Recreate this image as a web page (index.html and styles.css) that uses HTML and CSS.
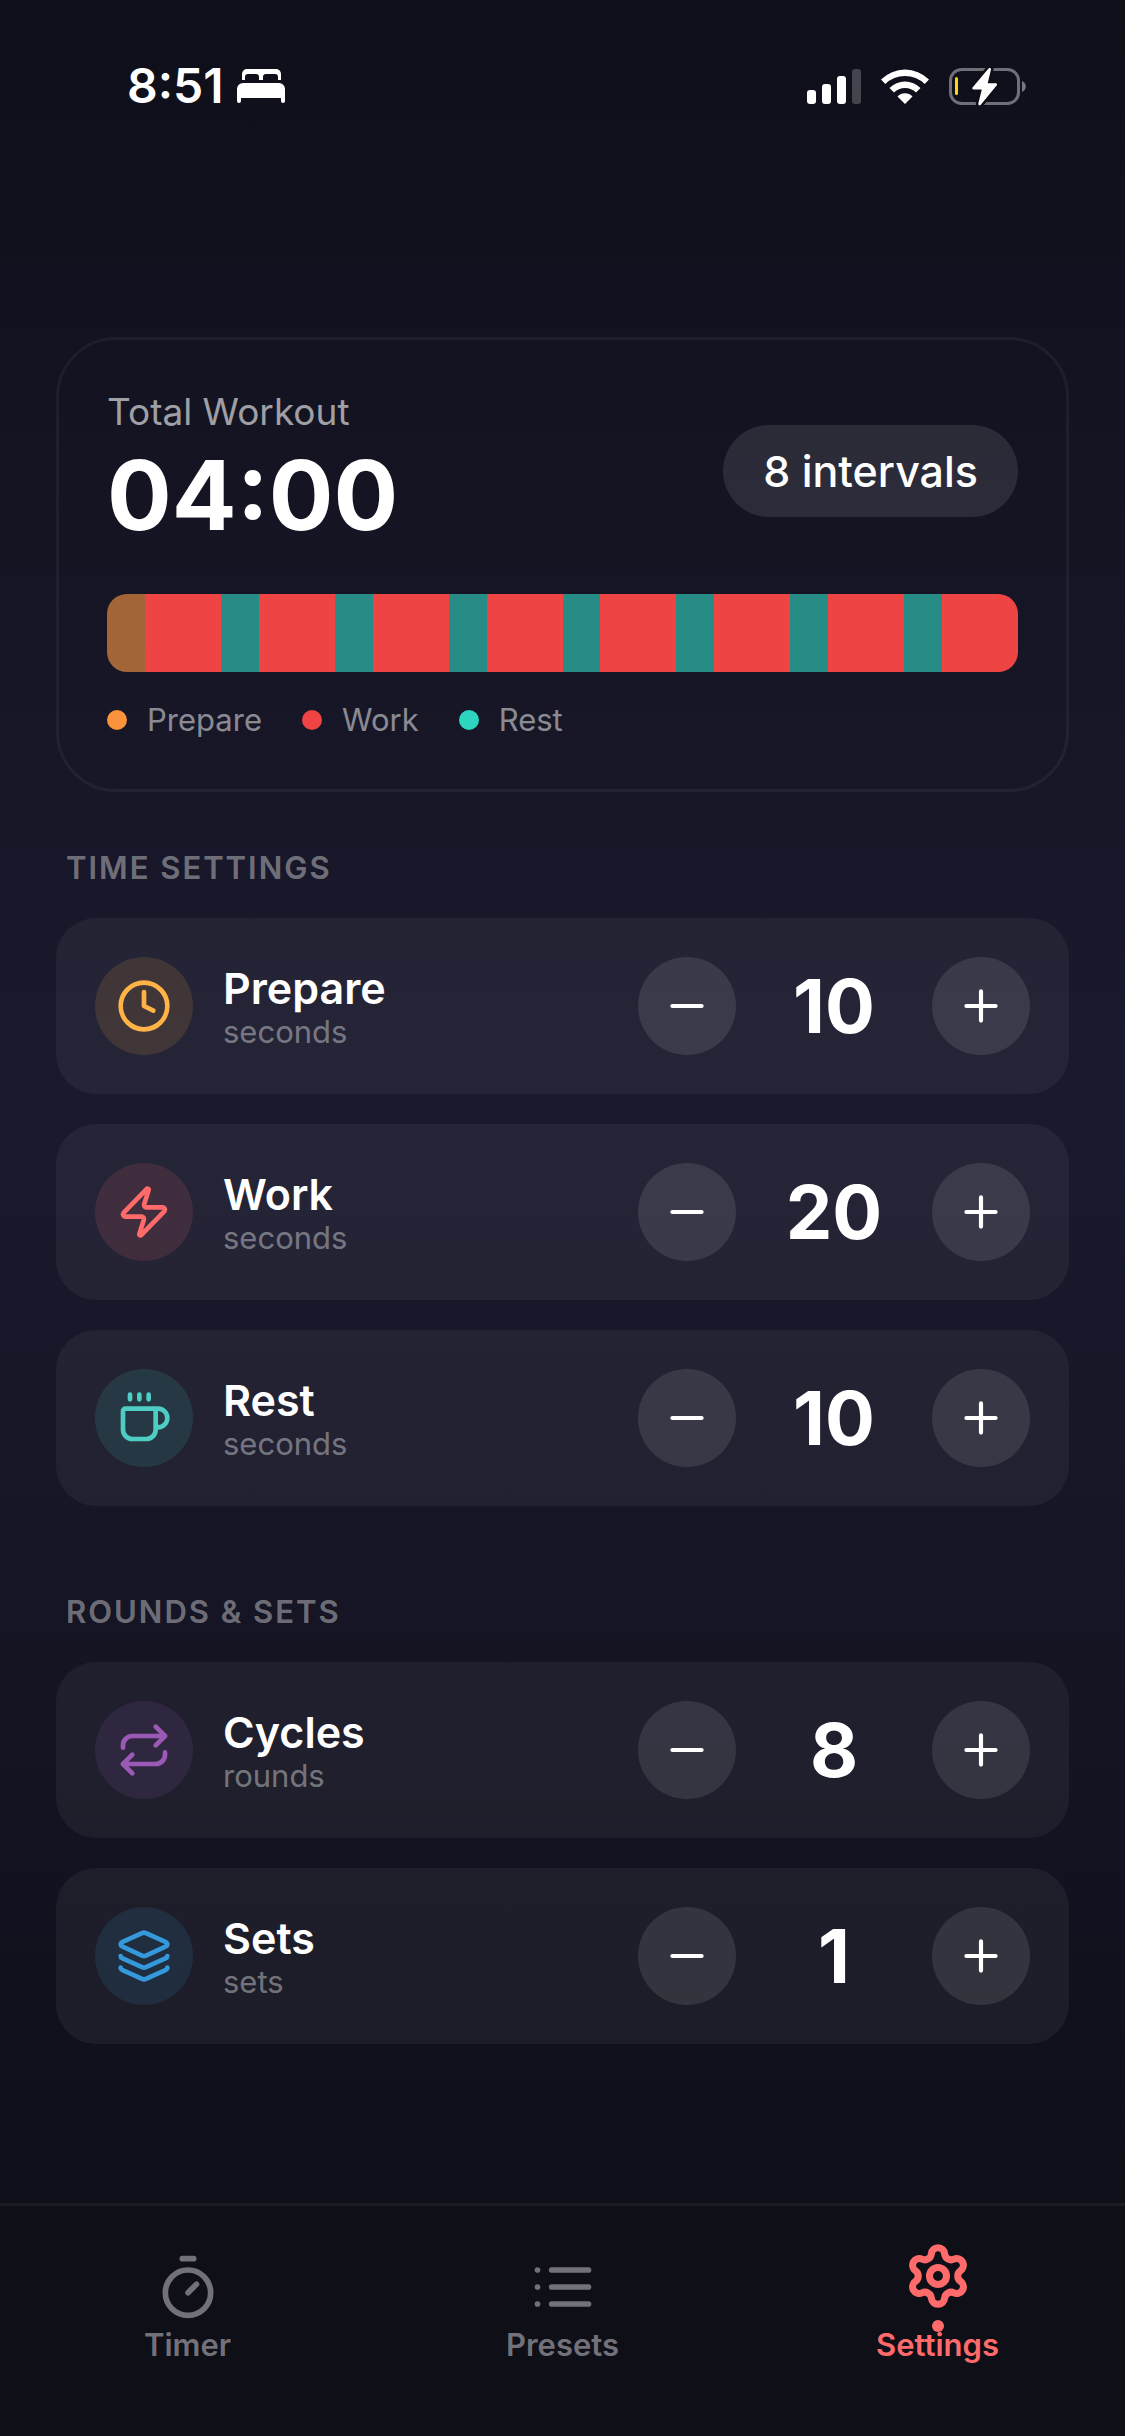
FILE: index.html
```html
<!DOCTYPE html>
<html lang="en">
<head>
  <meta charset="UTF-8">
  <meta name="viewport" content="width=device-width, initial-scale=1.0">
  <title>Settings</title>
  <link rel="stylesheet" href="styles.css">
</head>
<body>
  <div class="screen">
    <header class="status-bar">
      <div class="status-left">
        <span class="status-time">8:51</span>
        <svg class="bed-icon" viewBox="0 0 48 34" fill="currentColor">
          <path d="M5 11V5a5 5 0 0 1 5-5h29a5 5 0 0 1 5 5v6h-3V8a3 3 0 0 0-3-3H29a3 3 0 0 0-3 3v3h-4V8a3 3 0 0 0-3-3H11a3 3 0 0 0-3 3v3z"/>
          <path d="M0 20a6 6 0 0 1 6-6h36a6 6 0 0 1 6 6v12a2 2 0 0 1-4 0v-3H4v3a2 2 0 0 1-4 0z"/>
        </svg>
      </div>
      <div class="status-right">
        <svg class="signal-icon" viewBox="0 0 54 35" fill="currentColor">
          <rect x="0" y="21" width="9" height="14" rx="3"/>
          <rect x="15" y="15" width="9" height="20" rx="3"/>
          <rect x="30" y="7" width="9" height="28" rx="3"/>
          <rect x="45" y="0" width="9" height="35" rx="3" opacity="0.22"/>
        </svg>
        <svg class="wifi-icon" viewBox="0 0 48 35" fill="currentColor">
          <path d="M0 10.500a34 34 0 0 1 48 0l-4.300 4.500a28 28 0 0 0-39.400 0z"/>
          <path d="M8.500 19a22 22 0 0 1 31 0l-4.500 4.500a15.500 15.500 0 0 0-22 0z"/>
          <path d="M16.500 27.500a10.500 10.500 0 0 1 15 0L24 35z"/>
        </svg>
        <svg class="battery-icon" viewBox="0 0 77 39">
          <rect x="1.500" y="2.500" width="68" height="34" rx="11" fill="none" stroke="#6f6f78" stroke-width="3"/>
          <path d="M73 14c5 2 5 9 0 11z" fill="#77777f"/>
          <rect x="6" y="10" width="3" height="18" rx="1.500" fill="#ffd60a"/>
          <path d="M39.500 1.500 23.500 20.500c-.6 1 0 1.900 1 1.900h8.300L29.300 36.500c0 2 1.500 2.500 2.700 1L47.800 18.200c.6-1 0-1.900-1-1.900H38.700L42 2.500c.3-1.500-1.300-2.200-2.500-1z" fill="#fff" stroke="#0f0f1a" stroke-width="5" paint-order="stroke"/>
        </svg>
      </div>
    </header>

    <main class="content">
      <section class="summary-card">
        <div class="summary-header">
          <div>
            <div class="summary-label">Total Workout</div>
            <div class="summary-time">04:00</div>
          </div>
          <div class="interval-badge">8 intervals</div>
        </div>

        <div class="timeline">
          <span class="segment prepare"></span>
          <span class="segment work"></span>
          <span class="segment rest"></span>
          <span class="segment work"></span>
          <span class="segment rest"></span>
          <span class="segment work"></span>
          <span class="segment rest"></span>
          <span class="segment work"></span>
          <span class="segment rest"></span>
          <span class="segment work"></span>
          <span class="segment rest"></span>
          <span class="segment work"></span>
          <span class="segment rest"></span>
          <span class="segment work"></span>
          <span class="segment rest"></span>
          <span class="segment work"></span>
        </div>

        <ul class="legend">
          <li><span class="legend-dot dot-prepare"></span>Prepare</li>
          <li><span class="legend-dot dot-work"></span>Work</li>
          <li><span class="legend-dot dot-rest"></span>Rest</li>
        </ul>
      </section>

      <section class="settings-section">
        <h2 class="section-title">TIME SETTINGS</h2>

        <div class="setting-row">
          <span class="setting-icon icon-prepare">
            <svg class="icon" viewBox="0 0 24 24"><circle cx="12" cy="12" r="10"/><path d="M12 6v6l4 2"/></svg>
          </span>
          <div class="setting-info">
            <div class="setting-name">Prepare</div>
            <div class="setting-unit">seconds</div>
          </div>
          <div class="stepper">
            <button class="step-btn" type="button" aria-label="Decrease prepare"><svg class="icon" viewBox="0 0 24 24"><path d="M5 12h14"/></svg></button>
            <output class="step-value">10</output>
            <button class="step-btn" type="button" aria-label="Increase prepare"><svg class="icon" viewBox="0 0 24 24"><path d="M5 12h14M12 5v14"/></svg></button>
          </div>
        </div>

        <div class="setting-row">
          <span class="setting-icon icon-work">
            <svg class="icon" viewBox="0 0 24 24"><path d="M4 14a1 1 0 0 1-.78-1.63l9.900-10.200a.5.5 0 0 1 .86.46l-1.920 6.020A1 1 0 0 0 13 10h7a1 1 0 0 1 .78 1.630l-9.900 10.200a.5.5 0 0 1-.86-.46l1.920-6.020A1 1 0 0 0 11 14z"/></svg>
          </span>
          <div class="setting-info">
            <div class="setting-name">Work</div>
            <div class="setting-unit">seconds</div>
          </div>
          <div class="stepper">
            <button class="step-btn" type="button" aria-label="Decrease work"><svg class="icon" viewBox="0 0 24 24"><path d="M5 12h14"/></svg></button>
            <output class="step-value">20</output>
            <button class="step-btn" type="button" aria-label="Increase work"><svg class="icon" viewBox="0 0 24 24"><path d="M5 12h14M12 5v14"/></svg></button>
          </div>
        </div>

        <div class="setting-row">
          <span class="setting-icon icon-rest">
            <svg class="icon" viewBox="0 0 24 24"><path d="M6 2v2M10 2v2M14 2v2"/><path d="M16 8a1 1 0 0 1 1 1v8a4 4 0 0 1-4 4H7a4 4 0 0 1-4-4V9a1 1 0 0 1 1-1h14a4 4 0 1 1 0 8h-1"/></svg>
          </span>
          <div class="setting-info">
            <div class="setting-name">Rest</div>
            <div class="setting-unit">seconds</div>
          </div>
          <div class="stepper">
            <button class="step-btn" type="button" aria-label="Decrease rest"><svg class="icon" viewBox="0 0 24 24"><path d="M5 12h14"/></svg></button>
            <output class="step-value">10</output>
            <button class="step-btn" type="button" aria-label="Increase rest"><svg class="icon" viewBox="0 0 24 24"><path d="M5 12h14M12 5v14"/></svg></button>
          </div>
        </div>
      </section>

      <section class="settings-section">
        <h2 class="section-title">ROUNDS &amp; SETS</h2>

        <div class="setting-row">
          <span class="setting-icon icon-cycles">
            <svg class="icon" viewBox="0 0 24 24"><path d="m17 2 4 4-4 4"/><path d="M3 11v-1a4 4 0 0 1 4-4h14"/><path d="m7 22-4-4 4-4"/><path d="M21 13v1a4 4 0 0 1-4 4H3"/></svg>
          </span>
          <div class="setting-info">
            <div class="setting-name">Cycles</div>
            <div class="setting-unit">rounds</div>
          </div>
          <div class="stepper">
            <button class="step-btn" type="button" aria-label="Decrease cycles"><svg class="icon" viewBox="0 0 24 24"><path d="M5 12h14"/></svg></button>
            <output class="step-value">8</output>
            <button class="step-btn" type="button" aria-label="Increase cycles"><svg class="icon" viewBox="0 0 24 24"><path d="M5 12h14M12 5v14"/></svg></button>
          </div>
        </div>

        <div class="setting-row">
          <span class="setting-icon icon-sets">
            <svg class="icon" viewBox="0 0 24 24"><path d="M12.830 2.180a2 2 0 0 0-1.660 0L2.600 6.080a1 1 0 0 0 0 1.830l8.580 3.910a2 2 0 0 0 1.660 0l8.580-3.900a1 1 0 0 0 0-1.830z"/><path d="M2 12a1 1 0 0 0 .58.91l8.600 3.910a2 2 0 0 0 1.650 0l8.580-3.900A1 1 0 0 0 22 12"/><path d="M2 17a1 1 0 0 0 .58.91l8.600 3.910a2 2 0 0 0 1.650 0l8.580-3.900A1 1 0 0 0 22 17"/></svg>
          </span>
          <div class="setting-info">
            <div class="setting-name">Sets</div>
            <div class="setting-unit">sets</div>
          </div>
          <div class="stepper">
            <button class="step-btn" type="button" aria-label="Decrease sets"><svg class="icon" viewBox="0 0 24 24"><path d="M5 12h14"/></svg></button>
            <output class="step-value">1</output>
            <button class="step-btn" type="button" aria-label="Increase sets"><svg class="icon" viewBox="0 0 24 24"><path d="M5 12h14M12 5v14"/></svg></button>
          </div>
        </div>
      </section>
    </main>
  </div>

  <nav class="tab-bar">
    <a class="tab" href="#timer">
      <svg class="icon" viewBox="0 0 24 24"><path d="M10 2h4M12 14l3-3"/><circle cx="12" cy="14" r="8"/></svg>
      <span>Timer</span>
    </a>
    <a class="tab" href="#presets">
      <svg class="icon" viewBox="0 0 24 24"><path d="M3 6h.01M3 12h.01M3 18h.01M8 6h13M8 12h13M8 18h13"/></svg>
      <span>Presets</span>
    </a>
    <a class="tab active" href="#settings" aria-current="page">
      <svg class="icon" viewBox="0 0 24 24"><path d="M9.671 4.136a2.340 2.340 0 0 1 4.659 0 2.340 2.340 0 0 0 3.319 1.915 2.340 2.340 0 0 1 2.330 4.033 2.340 2.340 0 0 0 0 3.831 2.340 2.340 0 0 1-2.330 4.033 2.340 2.340 0 0 0-3.319 1.915 2.340 2.340 0 0 1-4.659 0 2.340 2.340 0 0 0-3.320-1.915 2.340 2.340 0 0 1-2.330-4.033 2.340 2.340 0 0 0 0-3.831A2.340 2.340 0 0 1 6.350 6.051a2.340 2.340 0 0 0 3.319-1.915"/><circle cx="12" cy="12" r="3"/></svg>
      <span>Settings</span>
    </a>
  </nav>
</body>
</html>
```
FILE: styles.css
```css
* {
  box-sizing: border-box;
}

body {
  margin: 0;
  min-height: 100vh;
  display: flex;
  flex-direction: column;
  background-color: #0f0f1a;
  color: #fff;
  font-family: Inter, "Liberation Sans", sans-serif;
}

.screen {
  flex: 1;
  background: linear-gradient(180deg, #0f0f1a 0%, #1a1a2e 50%, #0f0f1a 100%);
}

.icon {
  display: block;
  fill: none;
  stroke: currentColor;
  stroke-width: 2;
  stroke-linecap: round;
  stroke-linejoin: round;
}

/* Status bar */
.status-bar {
  display: flex;
  justify-content: space-between;
  align-items: center;
  padding: 61px 99px 0 127px;
}

.status-left,
.status-right {
  display: flex;
  align-items: center;
}

.status-left {
  gap: 13px;
}

.status-right {
  gap: 20px;
}

.status-time {
  font-size: 48px;
  font-weight: 600;
  line-height: 50px;
}

.bed-icon {
  width: 48px;
  height: 34px;
}

.signal-icon {
  width: 54px;
  height: 35px;
}

.wifi-icon {
  width: 48px;
  height: 35px;
}

.battery-icon {
  width: 77px;
  height: 39px;
}

.content {
  padding: 226px 56px 30px;
}

/* Summary card */
.summary-card {
  padding: 48px;
  border: 3px solid rgba(255, 255, 255, 0.05);
  border-radius: 60px;
}

.summary-header {
  display: flex;
  justify-content: space-between;
  align-items: center;
  margin-bottom: 40px;
}

.summary-label {
  font-size: 37px;
  line-height: 48px;
  color: rgba(255, 255, 255, 0.6);
}

.summary-time {
  font-size: 96px;
  font-weight: 700;
  line-height: 118px;
}

.interval-badge {
  padding: 20px 40px;
  border-radius: 46px;
  background-color: rgba(255, 255, 255, 0.1);
  font-size: 43px;
  font-weight: 500;
  line-height: 52px;
}

.timeline {
  display: flex;
  height: 78px;
  border-radius: 20px;
  background-color: rgba(255, 255, 255, 0.05);
  overflow: hidden;
}

.segment {
  flex: 10;
}

.segment.prepare {
  background-color: rgba(251, 146, 60, 0.6);
}

.segment.work {
  flex: 20;
  background-color: #ef4444;
}

.segment.rest {
  background-color: rgba(45, 212, 191, 0.6);
}

.legend {
  display: flex;
  gap: 40px;
  margin: 27px 0 0;
  padding: 0;
  list-style: none;
  font-size: 31px;
  line-height: 42px;
  color: rgba(255, 255, 255, 0.5);
}

.legend li {
  display: flex;
  align-items: center;
  gap: 20px;
}

.legend-dot {
  width: 20px;
  height: 20px;
  border-radius: 50%;
}

.dot-prepare {
  background-color: #fb923c;
}

.dot-work {
  background-color: #ef4444;
}

.dot-rest {
  background-color: #2dd4bf;
}

/* Setting rows */
.settings-section {
  padding-top: 58px;
}

.section-title {
  margin: 0 10px 32px;
  font-size: 31px;
  font-weight: 600;
  line-height: 36px;
  letter-spacing: 2px;
  color: rgba(255, 255, 255, 0.4);
}

.setting-row {
  display: flex;
  align-items: center;
  gap: 30px;
  margin-bottom: 30px;
  padding: 39px;
  border-radius: 40px;
  background-color: rgba(255, 255, 255, 0.05);
}

.setting-icon {
  display: flex;
  justify-content: center;
  align-items: center;
  width: 98px;
  height: 98px;
  border-radius: 50%;
}

.setting-icon .icon {
  width: 56px;
  height: 56px;
}

.icon-prepare {
  color: #ffb347;
  background-color: rgba(255, 179, 71, 0.13);
}

.icon-work {
  color: #ff6b6b;
  background-color: rgba(255, 107, 107, 0.13);
}

.icon-rest {
  color: #4ecdc4;
  background-color: rgba(78, 205, 196, 0.13);
}

.icon-cycles {
  color: #9b59b6;
  background-color: rgba(155, 89, 182, 0.13);
}

.icon-sets {
  color: #3498db;
  background-color: rgba(52, 152, 219, 0.13);
}

.setting-info {
  flex: 1;
  margin: -5px 0;
}

.setting-name {
  font-size: 43px;
  font-weight: 600;
  line-height: 52px;
}

.setting-unit {
  font-size: 31px;
  line-height: 36px;
  color: rgba(255, 255, 255, 0.4);
}

.stepper {
  display: flex;
  align-items: center;
}

.step-btn {
  display: flex;
  justify-content: center;
  align-items: center;
  width: 98px;
  height: 98px;
  padding: 0;
  border: none;
  border-radius: 50%;
  background-color: rgba(255, 255, 255, 0.1);
  color: #fff;
  cursor: pointer;
}

.step-btn .icon {
  width: 50px;
  height: 50px;
}

.step-value {
  width: 196px;
  font-size: 74px;
  font-weight: 700;
  line-height: 88px;
  text-align: center;
}

/* Tab bar */
.tab-bar {
  display: flex;
  align-items: flex-end;
  padding: 36px 0 73px;
  border-top: 3px solid rgba(255, 255, 255, 0.05);
  background-color: #0f0f18;
}

.tab {
  position: relative;
  flex: 1;
  display: flex;
  flex-direction: column;
  align-items: center;
  gap: 6px;
  font-size: 31px;
  font-weight: 600;
  line-height: 36px;
  color: #72717a;
  text-decoration: none;
}

.tab .icon {
  width: 68px;
  height: 68px;
}

.tab.active {
  gap: 17px;
  color: #ff6b6b;
}

.tab.active .icon {
  stroke-width: 2.5;
}

.tab.active::after {
  content: "";
  position: absolute;
  top: 78px;
  width: 12px;
  height: 12px;
  border-radius: 50%;
  background-color: #ff6b6b;
}
```
